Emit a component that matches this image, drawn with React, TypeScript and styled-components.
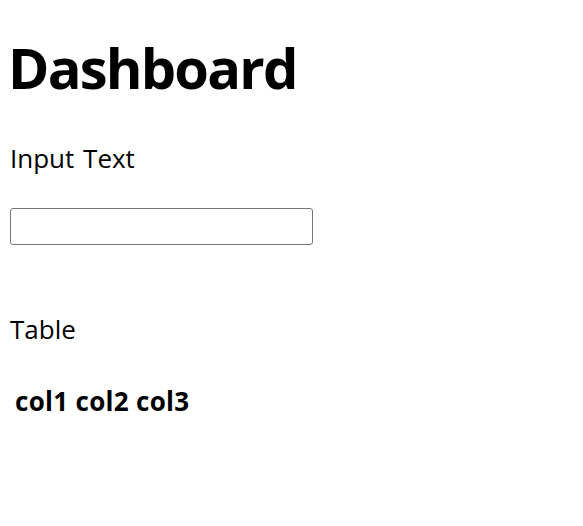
import React from "react";
import styled, { createGlobalStyle } from "styled-components";

const Global = createGlobalStyle`
  html, body { margin: 0; padding: 0; background: #fff; }
  body { font-family: "Open Sans", "Noto Sans", sans-serif; color: #000; }
`;

const Page = styled.div`
  padding: 8px;
  display: flex;
  flex-direction: column;
  align-items: flex-start;
`;

const Title = styled.h1`
  margin: 29px 0 0;
  font-size: 56px;
  line-height: 60px;
  font-weight: 700;
  letter-spacing: -1.8px;
`;

const Label = styled.div<{ $top: number }>`
  margin-top: ${(p) => p.$top}px;
  font-size: 26px;
  line-height: 30px;
  padding-left: 2px;
  word-spacing: 2px;
`;

const TextInput = styled.input`
  margin: 35px 0 0 2px;
  width: 303px;
  height: 37px;
  box-sizing: border-box;
  border: 1px solid #767676;
  border-radius: 3px;
  padding: 0 8px;
  font: inherit;
  font-size: 16px;
`;

const Table = styled.table`
  margin-top: 39px;
  border-spacing: 2px;
`;

const HeadCell = styled.th`
  padding: 1px 0 1px 5px;
  font-size: 26px;
  font-weight: 700;
  text-align: left;
  line-height: 30px;
  letter-spacing: 0.3px;
`;

export default function App() {
  return (
    <>
      <Global />
      <Page>
        <Title>Dashboard</Title>
        <Label $top={46}>Input Text</Label>
        <TextInput type="text" />
        <Label $top={69}>Table</Label>
        <Table>
          <thead>
            <tr>
              <HeadCell>col1 col2 col3</HeadCell>
            </tr>
          </thead>
        </Table>
      </Page>
    </>
  );
}
